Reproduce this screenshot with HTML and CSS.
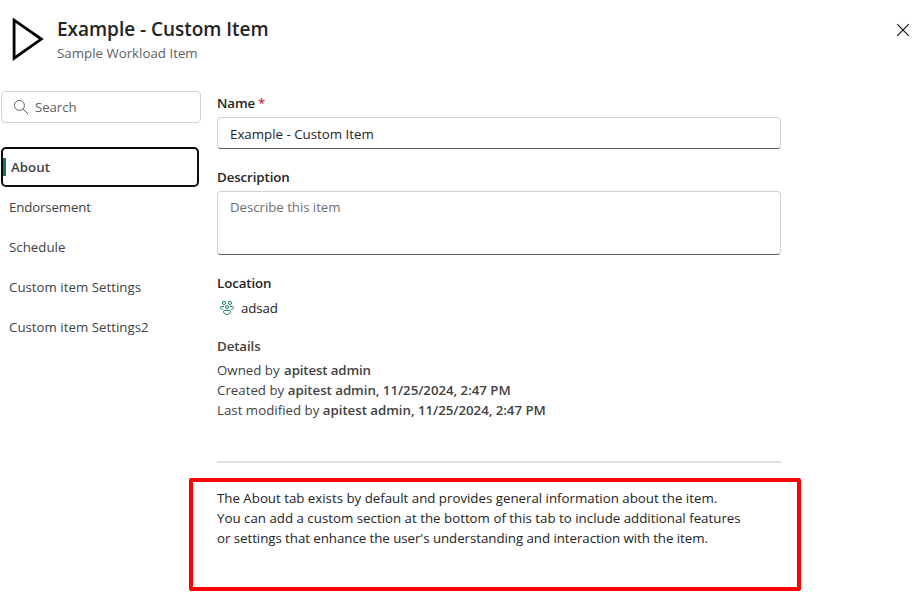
FILE: index.html
```html
<!DOCTYPE html>
<html lang="en">
<head>
<meta charset="utf-8">
<title>Example - Custom Item</title>
<link rel="stylesheet" href="styles.css">
</head>
<body>
<div class="panel">
  <header class="header">
    <svg class="logo" width="34" height="46" viewBox="0 0 34 46" fill="none" stroke="#000" stroke-width="2.8"><path d="M3.1 4.1V42.2L30.3 23.1Z"/></svg>
    <div class="heading">
      <h1 class="title">Example - Custom Item</h1>
      <p class="subtitle">Sample Workload Item</p>
    </div>
    <svg class="close" width="14" height="14" viewBox="0 0 14 14" fill="none" stroke="#111" stroke-width="1.15"><path d="M1.2 1.2L12.8 12.8M12.8 1.2L1.2 12.8"/></svg>
  </header>
  <div class="body">
    <aside class="sidebar">
      <div class="search">
        <svg width="16" height="16" viewBox="0 0 16 16" fill="none" stroke="#616161" stroke-width="1"><circle cx="6.4" cy="6.4" r="5"/><path d="M10 10L15 15"/></svg>
        <span>Search</span>
      </div>
      <nav class="nav">
        <a class="item active">About</a>
        <a class="item endorsement">Endorsement</a>
        <a class="item">Schedule</a>
        <a class="item">Custom item Settings</a>
        <a class="item">Custom item Settings2</a>
      </nav>
    </aside>
    <main class="main">
      <div class="label">Name<span class="required">*</span></div>
      <div class="field name-field">Example - Custom Item</div>
      <div class="label">Description</div>
      <div class="field description">Describe this item</div>
      <div class="label">Location</div>
      <div class="location">
        <svg width="16" height="16" viewBox="0 0 16 16" fill="none" stroke="#15836c" stroke-width="1"><circle cx="5" cy="2.9" r="1.6"/><circle cx="11" cy="2.9" r="1.6"/><circle cx="8" cy="7" r="1.5"/><path d="M5 6.5H2.3C1.5 6.5 1.3 7 1.5 7.7C1.8 8.8 2.6 9.4 3.7 9.6M11 6.5H13.7C14.5 6.5 14.7 7 14.5 7.7C14.2 8.8 13.4 9.4 12.3 9.6M5.4 10.5H10.6C11.4 10.5 11.7 11 11.5 11.7C11 13.6 9.8 14.5 8 14.5C6.2 14.5 5 13.6 4.5 11.7C4.3 11 4.6 10.5 5.4 10.5Z"/></svg>
        <span>adsad</span>
      </div>
      <div class="label details-label">Details</div>
      <div class="details">
        <p>Owned by <b class="owner">apitest admin</b></p>
        <p>Created by <b>apitest admin, 11/25/2024, 2:47 PM</b></p>
        <p>Last modified by <b>apitest admin, 11/25/2024, 2:47 PM</b></p>
      </div>
      <div class="divider"></div>
      <section class="callout">
        <p>The About tab exists by default and provides general information about the item.</p>
        <p class="second">You can add a custom section at the bottom of this tab to include additional features</p>
        <p class="third">or settings that enhance the user's understanding and interaction with the item.</p>
      </section>
    </main>
  </div>
</div>
</body>
</html>
```
FILE: styles.css
```css
* { box-sizing: border-box; }
body {
  margin: 0;
  background: #fff;
  color: #242424;
  font: 13.3px/20px "Open Sans", "Noto Sans", sans-serif;
}
h1, p { margin: 0; }
svg { display: block; flex: none; }
.panel { width: 922px; height: 598px; overflow: hidden; }
.header { display: flex; height: 91px; padding: 16px 12px 0 11px; }
.heading { flex: 1; margin-left: 12px; }
.title { font-size: 19px; line-height: 26px; font-weight: 600; letter-spacing: -0.03px; }
.subtitle { margin-top: 1px; color: #616161; }
.close { margin-top: 7px; }
.body { display: flex; }
.sidebar { width: 217px; padding-left: 1px; }
.search {
  display: flex;
  align-items: center;
  gap: 6px;
  width: 200px;
  height: 32px;
  padding-left: 11px;
  border: 1px solid #d1d1d1;
  border-radius: 4px;
  color: #616161;
  letter-spacing: -0.1px;
}
.nav { margin-top: 24px; }
.item {
  display: flex;
  align-items: center;
  height: 40px;
  padding-left: 8px;
  color: #424242;
}
.endorsement { letter-spacing: -0.15px; }
.active {
  width: 198px;
  padding-left: 0;
  border: 2px solid #0c0c0c;
  border-radius: 5px;
  font-weight: 600;
}
.active::before { content: ""; width: 3px; height: 18px; margin-right: 5px; background: #117865; }
.main { width: 564px; padding-top: 2px; }
.label { height: 24px; font-weight: 600; letter-spacing: -0.1px; }
.required { margin-left: 3px; color: #c4314b; }
.field {
  padding: 6px 12px;
  border: 1px solid #d1d1d1;
  border-bottom-color: #616161;
  border-radius: 4px;
  margin-bottom: 18px;
}
.name-field { height: 32px; }
.description { height: 64px; padding-top: 5px; color: #707070; letter-spacing: -0.06px; }
.location { display: flex; align-items: center; gap: 6px; height: 20px; margin: 1px 0 18px 2px; letter-spacing: -0.1px; }
.details-label, .details { color: #424242; }
.details b { font-weight: 600; letter-spacing: -0.04px; }
.details .owner { margin-left: 1px; letter-spacing: -0.15px; }
.divider { height: 2px; margin-top: 41px; background: #e0e0e0; }
.callout {
  width: 612px;
  height: 113px;
  margin: 15px 0 0 -28px;
  padding: 6px 24px;
  border: 4px solid #f00;
  border-radius: 2px;
  white-space: nowrap;
  letter-spacing: -0.01px;
}
.second { letter-spacing: 0; }
.third { letter-spacing: -0.05px; }
```
